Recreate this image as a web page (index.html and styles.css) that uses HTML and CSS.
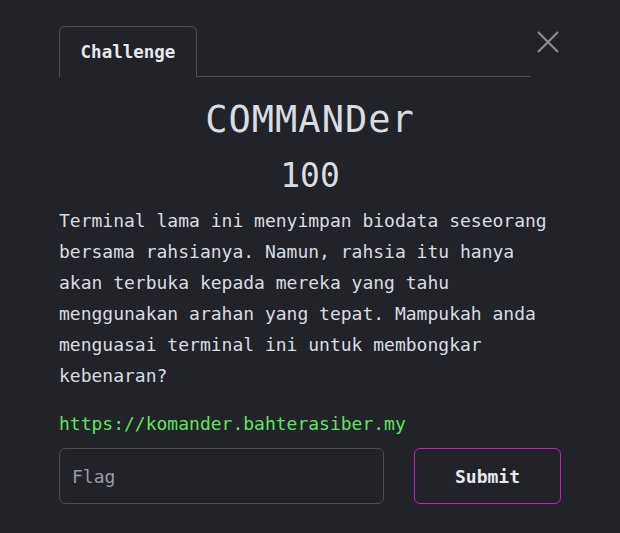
FILE: index.html
```html
<!DOCTYPE html>
<html>
<head>
<meta charset="utf-8">
<link rel="stylesheet" href="styles.css">
</head>
<body>
<div class="modal">
  <div class="header">
    <div class="tabs">
      <div class="tab">Challenge</div>
      <div class="tab-line"></div>
    </div>
    <button class="close" aria-label="Close">
      <svg width="22" height="22" viewBox="0 0 22 22"><path d="M1 1 L21 21 M21 1 L1 21" stroke="#8a8d93" stroke-width="2.2" fill="none"/></svg>
    </button>
  </div>
  <h1 class="title">COMMANDer</h1>
  <h2 class="points">100</h2>
  <p class="desc">Terminal lama ini menyimpan biodata seseorang bersama rahsianya. Namun, rahsia itu hanya akan terbuka kepada mereka yang tahu menggunakan arahan yang tepat. Mampukah anda menguasai terminal ini untuk membongkar kebenaran?</p>
  <a class="link" href="#">https://komander.bahterasiber.my</a>
  <form class="form">
    <input class="flag" type="text" placeholder="Flag">
    <button class="submit" type="button">Submit</button>
  </form>
</div>
</body>
</html>
```
FILE: styles.css
```css
html, body {
  margin: 0;
  padding: 0;
  background: #212328;
}
body {
  font-family: "DejaVu Sans Mono", monospace;
  color: #d9dce1;
}
.modal {
  width: 502px;
  padding: 26px 0 0 59px;
  display: flex;
  flex-direction: column;
}
.header {
  display: flex;
  align-items: flex-start;
}
.tabs {
  width: 472px;
  display: flex;
  align-items: flex-end;
}
.tab {
  width: 138px;
  height: 51px;
  box-sizing: border-box;
  border: 1px solid #4b4e55;
  border-bottom: none;
  border-radius: 6px 6px 0 0;
  display: flex;
  align-items: center;
  justify-content: center;
  font-size: 17.5px;
  font-weight: bold;
  color: #e6e8eb;
  padding-bottom: 1px;
}
.tab-line {
  flex: 1;
  border-bottom: 1px solid #4b4e55;
}
.close {
  background: none;
  border: none;
  padding: 0;
  margin: 5px 0 0 6px;
  width: 22px;
  height: 22px;
  display: flex;
}
.title {
  margin: 19px 0 0;
  text-align: center;
  font-size: 37px;
  font-weight: normal;
  letter-spacing: 1px;
  line-height: 48px;
}
.points {
  margin: 10px 0 0;
  text-align: center;
  font-size: 33px;
  font-weight: normal;
  line-height: 44px;
}
.desc {
  margin: 7px 0 0;
  width: 492px;
  font-size: 18px;
  line-height: 31px;
}
.link {
  margin-top: 20px;
  color: #5fe35f;
  text-decoration: none;
  font-size: 18px;
  line-height: 26px;
}
.form {
  margin: 11px 0 0;
  display: flex;
  justify-content: space-between;
}
.flag {
  width: 325px;
  height: 56px;
  box-sizing: border-box;
  background: transparent;
  border: 1px solid #4b4e55;
  border-radius: 6px;
  padding: 0 12px;
  font-family: "DejaVu Sans Mono", monospace;
  font-size: 18px;
  color: #d9dce1;
  outline: none;
}
.flag::placeholder {
  color: #9a9ca1;
}
.submit {
  width: 147px;
  height: 56px;
  box-sizing: border-box;
  background: transparent;
  border: 1px solid #c01fc6;
  border-radius: 6px;
  font-family: "DejaVu Sans Mono", monospace;
  font-size: 18px;
  font-weight: bold;
  color: #e6e8eb;
}
```
